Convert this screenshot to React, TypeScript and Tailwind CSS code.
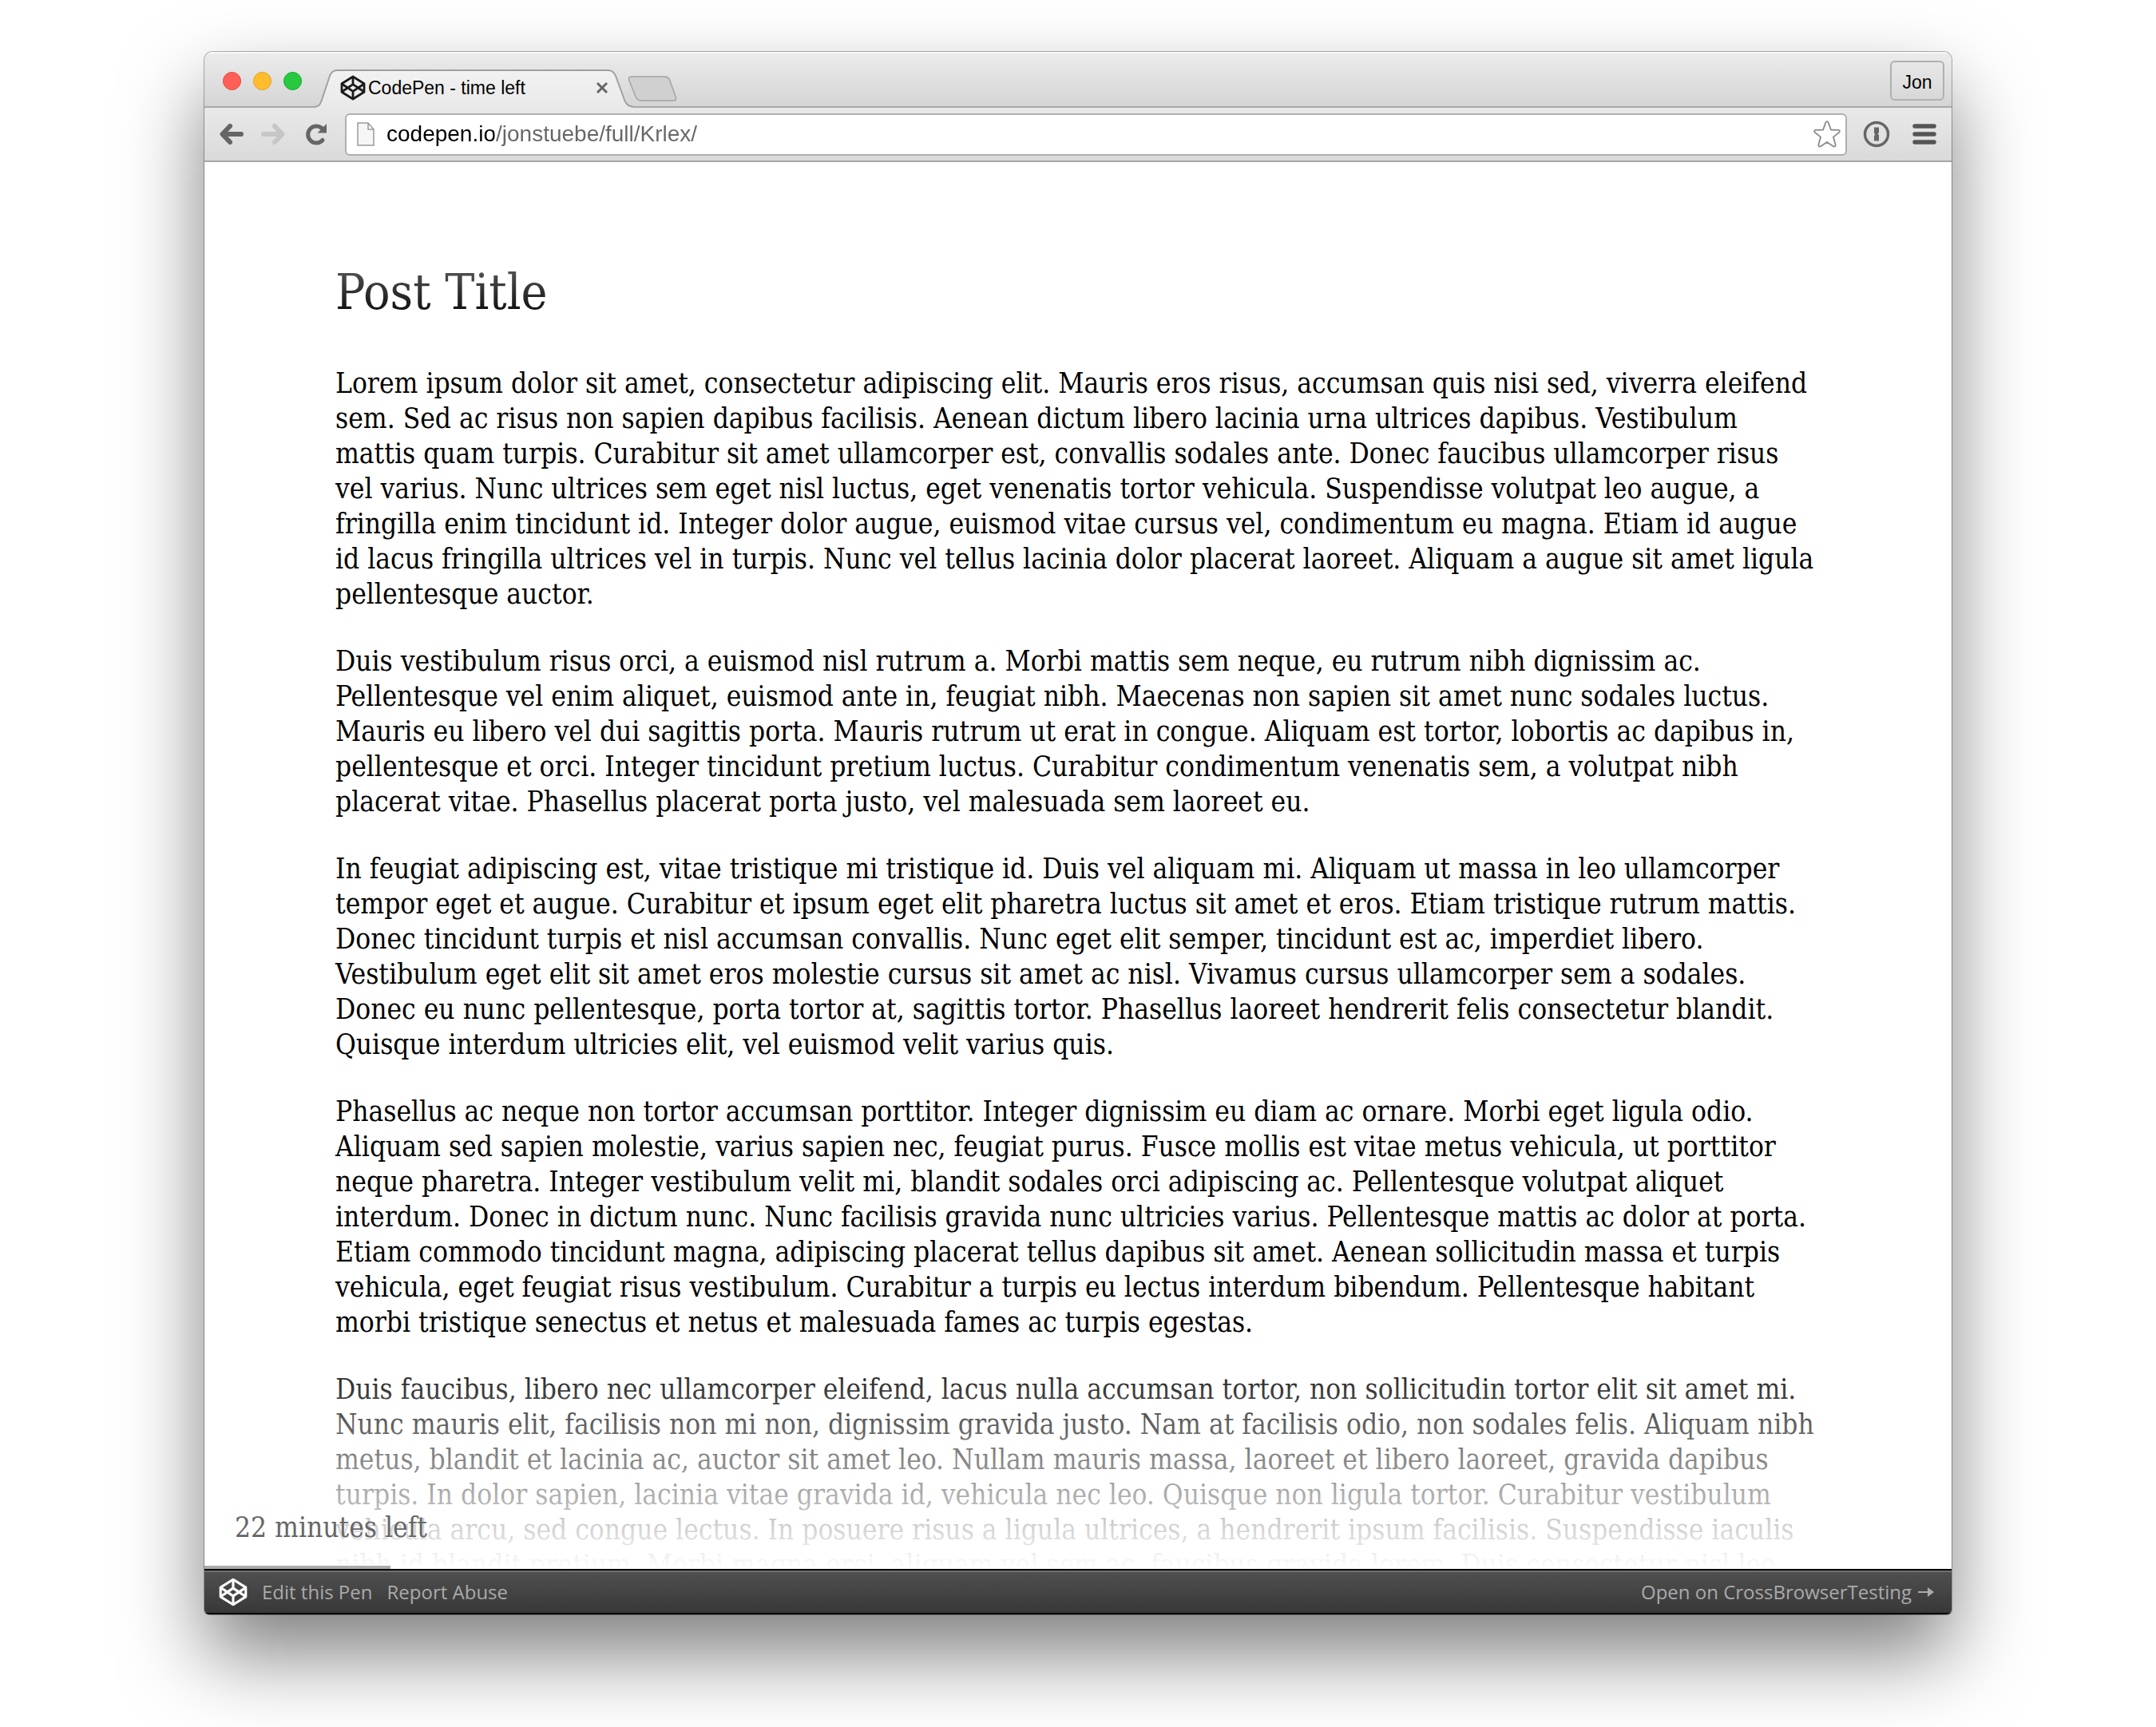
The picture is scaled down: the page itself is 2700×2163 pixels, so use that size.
import type { ReactNode } from "react";

const paragraphs: string[][] = [
  [
    "Lorem ipsum dolor sit amet, consectetur adipiscing elit. Mauris eros risus, accumsan quis nisi sed, viverra eleifend",
    "sem. Sed ac risus non sapien dapibus facilisis. Aenean dictum libero lacinia urna ultrices dapibus. Vestibulum",
    "mattis quam turpis. Curabitur sit amet ullamcorper est, convallis sodales ante. Donec faucibus ullamcorper risus",
    "vel varius. Nunc ultrices sem eget nisl luctus, eget venenatis tortor vehicula. Suspendisse volutpat leo augue, a",
    "fringilla enim tincidunt id. Integer dolor augue, euismod vitae cursus vel, condimentum eu magna. Etiam id augue",
    "id lacus fringilla ultrices vel in turpis. Nunc vel tellus lacinia dolor placerat laoreet. Aliquam a augue sit amet ligula",
    "pellentesque auctor.",
  ],
  [
    "Duis vestibulum risus orci, a euismod nisl rutrum a. Morbi mattis sem neque, eu rutrum nibh dignissim ac.",
    "Pellentesque vel enim aliquet, euismod ante in, feugiat nibh. Maecenas non sapien sit amet nunc sodales luctus.",
    "Mauris eu libero vel dui sagittis porta. Mauris rutrum ut erat in congue. Aliquam est tortor, lobortis ac dapibus in,",
    "pellentesque et orci. Integer tincidunt pretium luctus. Curabitur condimentum venenatis sem, a volutpat nibh",
    "placerat vitae. Phasellus placerat porta justo, vel malesuada sem laoreet eu.",
  ],
  [
    "In feugiat adipiscing est, vitae tristique mi tristique id. Duis vel aliquam mi. Aliquam ut massa in leo ullamcorper",
    "tempor eget et augue. Curabitur et ipsum eget elit pharetra luctus sit amet et eros. Etiam tristique rutrum mattis.",
    "Donec tincidunt turpis et nisl accumsan convallis. Nunc eget elit semper, tincidunt est ac, imperdiet libero.",
    "Vestibulum eget elit sit amet eros molestie cursus sit amet ac nisl. Vivamus cursus ullamcorper sem a sodales.",
    "Donec eu nunc pellentesque, porta tortor at, sagittis tortor. Phasellus laoreet hendrerit felis consectetur blandit.",
    "Quisque interdum ultricies elit, vel euismod velit varius quis.",
  ],
  [
    "Phasellus ac neque non tortor accumsan porttitor. Integer dignissim eu diam ac ornare. Morbi eget ligula odio.",
    "Aliquam sed sapien molestie, varius sapien nec, feugiat purus. Fusce mollis est vitae metus vehicula, ut porttitor",
    "neque pharetra. Integer vestibulum velit mi, blandit sodales orci adipiscing ac. Pellentesque volutpat aliquet",
    "interdum. Donec in dictum nunc. Nunc facilisis gravida nunc ultricies varius. Pellentesque mattis ac dolor at porta.",
    "Etiam commodo tincidunt magna, adipiscing placerat tellus dapibus sit amet. Aenean sollicitudin massa et turpis",
    "vehicula, eget feugiat risus vestibulum. Curabitur a turpis eu lectus interdum bibendum. Pellentesque habitant",
    "morbi tristique senectus et netus et malesuada fames ac turpis egestas.",
  ],
  [
    "Duis faucibus, libero nec ullamcorper eleifend, lacus nulla accumsan tortor, non sollicitudin tortor elit sit amet mi.",
    "Nunc mauris elit, facilisis non mi non, dignissim gravida justo. Nam at facilisis odio, non sodales felis. Aliquam nibh",
    "metus, blandit et lacinia ac, auctor sit amet leo. Nullam mauris massa, laoreet et libero laoreet, gravida dapibus",
    "turpis. In dolor sapien, lacinia vitae gravida id, vehicula nec leo. Quisque non ligula tortor. Curabitur vestibulum",
    "vehicula arcu, sed congue lectus. In posuere risus a ligula ultrices, a hendrerit ipsum facilisis. Suspendisse iaculis",
    "nibh id blandit pretium. Morbi magna orci, aliquam vel sem ac, faucibus gravida lorem. Duis consectetur nisl leo",
  ],
];

function CodePenLogo({ className }: { className: string }) {
  return (
    <svg viewBox="0 0 32 32" className={className} fill="none" stroke="currentColor" strokeWidth="2.800" strokeLinejoin="round" aria-hidden="true">
      <path d="M16 2 30 10.800v10.400L16 30 2 21.200V10.800z" />
      <path d="M16 2v10M16 20v10M2 11l14 9.300 14-9.300M2 21l14-9.300 14 9.300" />
    </svg>
  );
}

function IconButton({ label, className, children }: { label: string; className: string; children: ReactNode }) {
  return (
    <button type="button" aria-label={label} className={`flex shrink-0 items-center justify-center ${className}`}>
      {children}
    </button>
  );
}

function TabStrip() {
  return (
    <header className="flex h-[70px] shrink-0 bg-linear-to-b from-[#ececec] to-[#d4d4d4] pl-[23px] pr-[9px] shadow-[inset_0_2px_0_#f8f8f8,inset_0_-2px_0_#a8a8a8]">
      <div className="mt-[25px] flex gap-[15px]">
        <button type="button" aria-label="Close window" className="size-[23px] rounded-full border border-[#e2463f] bg-[#ff5f57]" />
        <button type="button" aria-label="Minimize window" className="size-[23px] rounded-full border border-[#e1a116] bg-[#ffbd2e]" />
        <button type="button" aria-label="Zoom window" className="size-[23px] rounded-full border border-[#12ac28] bg-[#28c940]" />
      </div>
      <div className="relative ml-4 flex h-[70px] w-[400px] items-center pl-8 pr-8 pt-5">
        <svg viewBox="0 0 400 70" preserveAspectRatio="none" className="absolute inset-0 size-full" aria-hidden="true">
          <defs>
            <linearGradient id="tab" x1="0" y1="0" x2="0" y2="1">
              <stop offset="0" stopColor="#f2f2f2" />
              <stop offset="1" stopColor="#e9e9e9" />
            </linearGradient>
          </defs>
          <path d="M0 69C6 68 7 66 9 60L19 30Q22 23 28 23H367Q374 23 377 30L388 60C390 66 393 68 400 69V70H0z" fill="url(#tab)" />
          <path d="M0 69C6 68 7 66 9 60L19 30Q22 23 28 23H367Q374 23 377 30L388 60C390 66 393 68 400 69" fill="none" stroke="#a0a0a0" strokeWidth="2" />
        </svg>
        <CodePenLogo className="relative size-8 shrink-0 text-[#1a1a1a]" />
        <span className="relative ml-[3px] flex-1 text-[23px] whitespace-nowrap text-black">CodePen - time left</span>
        <IconButton label="Close tab" className="relative text-[#666]">
          <svg viewBox="0 0 16 16" className="size-4" stroke="currentColor" strokeWidth="3" aria-hidden="true">
            <path d="M2 2l12 12M14 2 2 14" />
          </svg>
        </IconButton>
      </div>
      <IconButton label="New tab" className="-ml-2 mt-[30px] h-8">
        <svg viewBox="0 0 62 32" className="h-8 w-[62px]" aria-hidden="true">
          <path d="M5 1H46Q51 1 53 6L60 26Q62 31 57 31H18Q12 31 10 26L2 6Q0 1 5 1z" fill="#d0d0d0" stroke="#a2a2a2" strokeWidth="1.500" />
        </svg>
      </IconButton>
      <button type="button" className="mt-[11px] ml-auto h-[50px] w-[68px] rounded-md border-2 border-[#b0b0b0] pt-1 text-[23px] text-black">
        Jon
      </button>
    </header>
  );
}

function Toolbar() {
  return (
    <div className="flex h-[68px] shrink-0 items-center border-b-2 border-[#a6a6a6] bg-linear-to-b from-[#e9e9e9] to-[#dadada] pl-[18px] pr-[19px] text-[#666]">
      <IconButton label="Back" className="mr-5">
        <svg viewBox="0 0 32 32" className="size-8" fill="none" stroke="currentColor" strokeWidth="6" strokeLinecap="round" strokeLinejoin="round" aria-hidden="true">
          <path d="M28 16H6M14 6 4.500 16 14 26" />
        </svg>
      </IconButton>
      <IconButton label="Forward" className="mr-6 text-[#c6c6c6]">
        <svg viewBox="0 0 32 32" className="size-8" fill="none" stroke="currentColor" strokeWidth="6" strokeLinecap="round" strokeLinejoin="round" aria-hidden="true">
          <path d="M4 16h22M18 6l9.500 10L18 26" />
        </svg>
      </IconButton>
      <IconButton label="Reload" className="mr-[22px]">
        <svg viewBox="0 0 28 28" className="size-7" fill="none" stroke="currentColor" strokeWidth="5" strokeLinecap="round" aria-hidden="true">
          <path d="M22 21.500A10.500 10.500 0 1 1 21 6.500" />
          <path d="M27 1V12.500H15.500z" fill="currentColor" stroke="none" />
        </svg>
      </IconButton>
      <div className="flex h-[53px] min-w-0 flex-1 items-center rounded-md border-2 border-[#b0b0b0] bg-white pl-[13px] pr-1.5">
        <svg viewBox="0 0 22 30" className="h-[30px] w-[22px] shrink-0" fill="#f6f6f6" stroke="#9a9a9a" strokeWidth="1.500" aria-hidden="true">
          <path d="M1 1H14L21 9V29H1zM14 1V9H21" />
        </svg>
        <input
          type="text"
          aria-label="Address"
          defaultValue="codepen.io/jonstuebe/full/Krlex/"
          className="ml-[15px] min-w-0 flex-1 bg-linear-to-r from-black from-[135px] to-[#666] to-[135px] bg-clip-text text-[28px] text-transparent outline-none"
        />
        <IconButton label="Bookmark this page" className="text-[#8a8a8a]">
          <svg viewBox="0 0 34 34" className="size-[34px]" fill="none" stroke="currentColor" strokeWidth="1.800" strokeLinejoin="round" aria-hidden="true">
            <path d="M15.300 2.600Q17 -.2 18.700 2.600L21.900 11.500L31 11.900Q34.300 12.500 32 15L24.900 20.600L27.600 30.100Q28 33.500 24.800 32.200L17 27L9.200 32.200Q6 33.500 6.400 30.100L9.100 20.600L2 15Q-.3 12.500 3 11.900L12.100 11.500z" />
          </svg>
        </IconButton>
      </div>
      <IconButton label="1Password" className="ml-5">
        <svg viewBox="0 0 34 34" className="size-[34px]" aria-hidden="true">
          <circle cx="17" cy="17" r="14.500" fill="none" stroke="currentColor" strokeWidth="3.500" />
          <path d="M14 8.500H20V15L18.500 16.500L20 18V25.500H14V19L15.500 17.500L14 16z" fill="currentColor" />
        </svg>
      </IconButton>
      <IconButton label="Menu" className="ml-7">
        <svg viewBox="0 0 30 26" className="h-[26px] w-[30px]" stroke="#555" strokeWidth="5.500" strokeLinecap="round" aria-hidden="true">
          <path d="M3 3H27M3 13H27M3 23H27" />
        </svg>
      </IconButton>
    </div>
  );
}

export default function App() {
  return (
    <div className="h-screen bg-white px-[256px] pt-[65px] pb-[141px] font-['Liberation_Sans',Arial,sans-serif]">
      <div className="flex h-full flex-col overflow-hidden rounded-t-[10px] rounded-b-md shadow-[0_0_0_1px_rgba(0,0,0,0.3),0_50px_100px_rgba(0,0,0,0.5)]">
        <TabStrip />
        <Toolbar />
        <main className="relative min-h-0 flex-1 overflow-hidden bg-white font-['DejaVu_Serif_Condensed','DejaVu_Serif',serif] text-black">
          <article className="px-[164px] pt-[127px]">
            <h1 className="text-[62px] leading-[72px]">Post Title</h1>
            <div className="mt-14 flex flex-col gap-10 text-[35px] leading-[44px] whitespace-nowrap">
              {paragraphs.map((lines) => (
                <p key={lines[0]}>
                  {lines.map((line) => (
                    <span key={line} className="block">
                      {line}
                    </span>
                  ))}
                </p>
              ))}
            </div>
          </article>
          <div className="pointer-events-none absolute inset-x-0 top-0 h-[200px] bg-linear-to-b from-white to-white/0" />
          <div className="pointer-events-none absolute inset-x-0 bottom-0 h-[290px] bg-linear-to-t from-white to-white/0" />
          <p className="absolute bottom-[30px] left-[38px] text-[35px] leading-[44px] text-[#666]">22 minutes left</p>
          <div className="absolute bottom-0 left-0 h-1 w-[233px] bg-[#aaa]" />
        </main>
        <footer className="flex h-[57px] shrink-0 items-center border-y-2 border-black bg-linear-to-b from-[#505050] to-[#383838] pr-[22px] pl-[18px] font-['Open_Sans',sans-serif] text-[24px] text-[#aaa] shadow-[inset_0_2px_0_#707070]">
          <CodePenLogo className="size-9 text-white" />
          <a href="#edit" className="ml-[18px]">Edit this Pen</a>
          <a href="#report" className="ml-[18px]">Report Abuse</a>
          <a href="#testing" className="ml-auto flex items-center gap-2">
            Open on CrossBrowserTesting
            <svg viewBox="0 0 20 14" className="h-3.5 w-5" aria-hidden="true">
              <path d="M0 6H12V1L20 7 12 13V8H0z" fill="currentColor" />
            </svg>
          </a>
        </footer>
      </div>
    </div>
  );
}
